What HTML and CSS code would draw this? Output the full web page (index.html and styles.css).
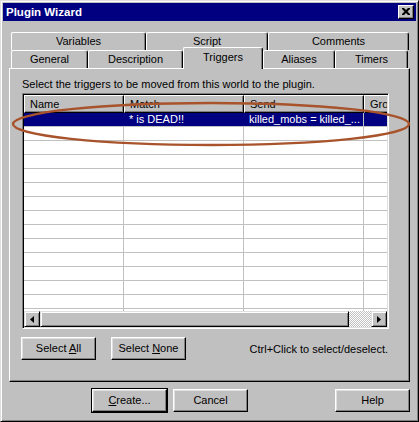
FILE: index.html
```html
<!DOCTYPE html>
<html lang="en">
<head>
  <meta charset="UTF-8">
  <title>Plugin Wizard</title>
  <link rel="stylesheet" href="styles.css">
</head>
<body>

  <div class="ventana">
    <div class="titulo-barra">
      <span class="titulo">Plugin Wizard</span>
      <div class="cerrar">
        <svg width="8" height="7" viewBox="0 0 8 7"><path d="M0 0h2l2 2 2-2h2v1l-2.5 2.5 2.5 2.5v1h-2l-2-2-2 2h-2v-1l2.5-2.5-2.5-2.5z" fill="#000"/></svg>
      </div>
    </div>

    <div class="contenido">
      <div class="pestanas">
        <div class="fila-pestanas">
          <div class="pestana p-variables">Variables</div>
          <div class="pestana p-script">Script</div>
          <div class="pestana p-comments">Comments</div>
        </div>
        <div class="fila-pestanas">
          <div class="pestana p-general">General</div>
          <div class="pestana p-description">Description</div>
          <div class="pestana p-triggers activa">Triggers</div>
          <div class="pestana p-aliases">Aliases</div>
          <div class="pestana p-timers">Timers</div>
        </div>
      </div>

      <div class="panel">
        <div class="aviso">Select the triggers to be moved from this world to the plugin.</div>

        <div class="lista">
          <div class="cabecera">
            <div class="col c-name">Name</div>
            <div class="col c-match">Match</div>
            <div class="col c-send">Send</div>
            <div class="col c-group">Group</div>
          </div>
          <div class="filas">
            <div class="fila sel">
              <div class="celda c-name"></div>
              <div class="celda c-match">* is DEAD!!</div>
              <div class="celda c-send">killed_mobs = killed_...</div>
              <div class="celda c-group"></div>
            </div>
            <div class="fila"><div class="celda c-name"></div><div class="celda c-match"></div><div class="celda c-send"></div><div class="celda c-group"></div></div>
            <div class="fila"><div class="celda c-name"></div><div class="celda c-match"></div><div class="celda c-send"></div><div class="celda c-group"></div></div>
            <div class="fila"><div class="celda c-name"></div><div class="celda c-match"></div><div class="celda c-send"></div><div class="celda c-group"></div></div>
            <div class="fila"><div class="celda c-name"></div><div class="celda c-match"></div><div class="celda c-send"></div><div class="celda c-group"></div></div>
            <div class="fila"><div class="celda c-name"></div><div class="celda c-match"></div><div class="celda c-send"></div><div class="celda c-group"></div></div>
            <div class="fila"><div class="celda c-name"></div><div class="celda c-match"></div><div class="celda c-send"></div><div class="celda c-group"></div></div>
            <div class="fila"><div class="celda c-name"></div><div class="celda c-match"></div><div class="celda c-send"></div><div class="celda c-group"></div></div>
            <div class="fila"><div class="celda c-name"></div><div class="celda c-match"></div><div class="celda c-send"></div><div class="celda c-group"></div></div>
            <div class="fila"><div class="celda c-name"></div><div class="celda c-match"></div><div class="celda c-send"></div><div class="celda c-group"></div></div>
            <div class="fila"><div class="celda c-name"></div><div class="celda c-match"></div><div class="celda c-send"></div><div class="celda c-group"></div></div>
            <div class="fila"><div class="celda c-name"></div><div class="celda c-match"></div><div class="celda c-send"></div><div class="celda c-group"></div></div>
            <div class="fila"><div class="celda c-name"></div><div class="celda c-match"></div><div class="celda c-send"></div><div class="celda c-group"></div></div>
            <div class="fila"><div class="celda c-name"></div><div class="celda c-match"></div><div class="celda c-send"></div><div class="celda c-group"></div></div>
            <div class="fila"><div class="celda c-name"></div><div class="celda c-match"></div><div class="celda c-send"></div><div class="celda c-group"></div></div>
          </div>
          <div class="scroll">
            <div class="flecha">
              <svg width="4" height="7" viewBox="0 0 4 7"><path d="M4 0v7L0 3.5z" fill="#000"/></svg>
            </div>
            <div class="pulgar"></div>
            <div class="pista"></div>
            <div class="flecha">
              <svg width="4" height="7" viewBox="0 0 4 7"><path d="M0 0v7L4 3.5z" fill="#000"/></svg>
            </div>
          </div>
        </div>

        <div class="pie-panel">
          <button class="boton">Select <u>A</u>ll</button>
          <button class="boton b-none">Select <u>N</u>one</button>
          <span class="ayuda">Ctrl+Click to select/deselect.</span>
        </div>
      </div>

      <div class="acciones">
        <button class="boton b-create defecto"><u>C</u>reate...</button>
        <button class="boton b-cancel">Cancel</button>
        <button class="boton b-help">Help</button>
      </div>
    </div>

    <!-- marca hecha a mano sobre la captura -->
    <svg class="marca" width="419" height="422" viewBox="0 0 419 422">
      <ellipse cx="211" cy="124" rx="198" ry="21" fill="none" stroke="#a8532b" stroke-width="2.4"/>
    </svg>
  </div>

</body>
</html>
```

FILE: styles.css
```css
body {
  margin: 0;
  font-family: "Liberation Sans", Arial, sans-serif;
  font-size: 11px;
  color: #000;
}
.ventana {
  position: relative;
  box-sizing: border-box;
  width: 419px;
  height: 422px;
  background-color: #c0c0c0;
  border: 1px solid;
  border-color: #dfdfdf #000 #000 #dfdfdf;
  box-shadow: inset 1px 1px #fff, inset -1px -1px #808080;
  padding: 2px;
}
.titulo-barra {
  height: 18px;
  background-color: #000080;
  display: flex;
  align-items: center;
  justify-content: space-between;
  padding: 0 2px 0 3px;
}
.titulo {
  color: white;
  font-weight: bold;
  font-size: 11.5px;
}
.cerrar {
  box-sizing: border-box;
  width: 16px;
  height: 14px;
  background-color: #c0c0c0;
  border: 1px solid;
  border-color: #fff #000 #000 #fff;
  box-shadow: inset -1px -1px #808080;
  display: flex;
  justify-content: center;
  align-items: center;
  padding: 0 1px 1px 0;
}
.contenido {
  padding: 0 6px;
}
.pestanas {
  padding: 11px 0 0 2px;
}
.fila-pestanas {
  display: flex;
  height: 18px;
}
.pestana {
  box-sizing: border-box;
  height: 18px;
  border: 1px solid #fff;
  border-right-color: #000;
  border-bottom: none;
  border-radius: 2px 3px 0 0;
  box-shadow: inset -1px 0 #808080;
  background-color: #c0c0c0;
  display: flex;
  justify-content: center;
  align-items: center;
  padding-bottom: 1px;
}
.p-variables { width: 135px; }
.p-script { width: 122px; }
.p-comments { width: 141px; }
.p-general { width: 77px; }
.p-description { width: 95px; }
.p-triggers { width: 80px; }
.p-aliases { width: 72px; }
.p-timers { width: 73px; }
.pestana.activa {
  position: relative;
  z-index: 2;
  height: 22px;
  margin-top: -3px;
  padding-bottom: 4px;
}
.panel {
  box-sizing: border-box;
  height: 314px;
  border: 1px solid;
  border-color: #fff #000 #000 #fff;
  box-shadow: inset -1px -1px #808080;
  padding: 9px 0 0 12px;
}
.aviso {
  line-height: 13px;
  margin-bottom: 2px;
}
.lista {
  box-sizing: border-box;
  width: 367px;
  height: 236px;
  border: 1px solid;
  border-color: #808080 #fff #fff #808080;
  box-shadow: inset 1px 1px #000, inset -1px -1px #dfdfdf;
  padding: 1px;
  display: flex;
  flex-direction: column;
  overflow: hidden;
}
.cabecera {
  display: flex;
  height: 18px;
  flex: none;
  overflow: hidden;
}
.col {
  box-sizing: border-box;
  flex: none;
  height: 18px;
  border: 1px solid;
  border-color: #fff #000 #000 #fff;
  box-shadow: inset -1px -1px #808080;
  background-color: #c0c0c0;
  padding: 2px 0 0 5px;
  line-height: 13px;
  white-space: nowrap;
  overflow: hidden;
}
.c-name { width: 100px; }
.c-match { width: 120px; }
.c-send { width: 120px; }
.c-group { width: 60px; }
.filas {
  flex: 1;
  background-color: #fff;
  overflow: hidden;
}
.fila {
  display: flex;
  height: 14px;
  box-sizing: border-box;
  border-bottom: 1px solid #c0c0c0;
}
.celda {
  box-sizing: border-box;
  flex: none;
  border-right: 1px solid #c0c0c0;
  padding-left: 5px;
  line-height: 13px;
  white-space: nowrap;
  overflow: hidden;
}
.fila.sel {
  background-color: #000080;
  color: white;
}
.fila.sel .celda {
  border-right-color: #000080;
}
.fila.sel .c-send {
  border-right-color: #c0c0c0;
}
.scroll {
  display: flex;
  height: 16px;
  flex: none;
}
.flecha, .pulgar {
  box-sizing: border-box;
  height: 16px;
  background-color: #c0c0c0;
  border: 1px solid;
  border-color: #dfdfdf #000 #000 #dfdfdf;
  box-shadow: inset 1px 1px #fff, inset -1px -1px #808080;
}
.flecha {
  width: 16px;
  display: flex;
  justify-content: center;
  align-items: center;
}
.pulgar {
  width: 309px;
}
.pista {
  flex: 1;
  background: repeating-conic-gradient(#c0c0c0 0 25%, #fff 0 50%) 0 0 / 2px 2px;
}
.pie-panel {
  display: flex;
  align-items: center;
  margin: 8px 0 0 -1px;
  padding-right: 21px;
}
.boton {
  box-sizing: border-box;
  width: 75px;
  height: 23px;
  font-family: inherit;
  font-size: 11px;
  color: #000;
  background-color: #c0c0c0;
  border: 1px solid;
  border-color: #fff #000 #000 #fff;
  box-shadow: inset -1px -1px #808080, inset 1px 1px #dfdfdf;
  padding: 0 0 1px 0;
  margin: 0;
}
.b-none {
  margin-left: 15px;
}
.ayuda {
  margin-left: auto;
}
.acciones {
  display: flex;
  margin-top: 7px;
}
.b-create {
  margin-left: 83px;
}
.b-cancel {
  margin-left: 6px;
}
.b-help {
  margin-left: auto;
}
.boton.defecto {
  outline: 1px solid #000;
  outline-offset: 0;
  border-color: #fff #000 #000 #fff;
  box-shadow: inset -1px -1px #808080, inset 1px 1px #dfdfdf, 0 0 0 0 #000;
}
.marca {
  position: absolute;
  left: -1px;
  top: -1px;
  pointer-events: none;
}
```
